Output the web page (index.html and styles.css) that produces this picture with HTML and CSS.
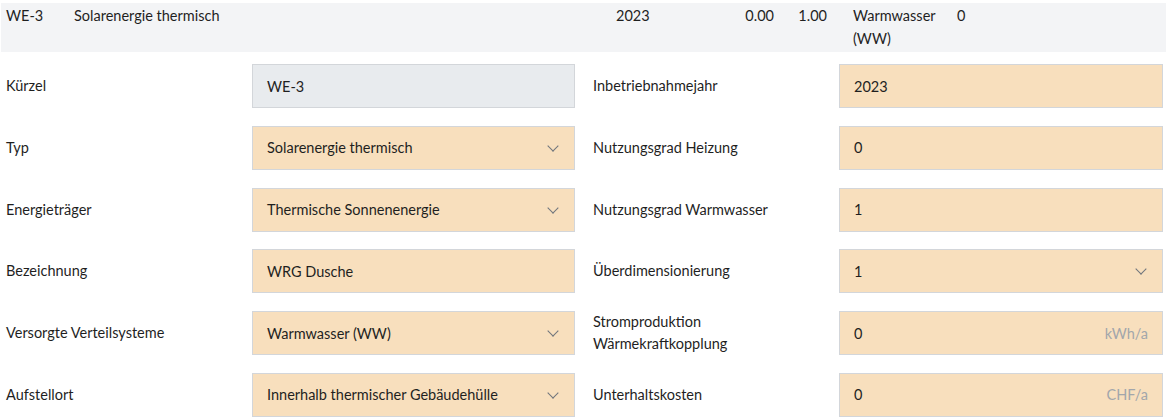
FILE: index.html
```html
<!DOCTYPE html>
<html lang="de">

<head>
    <meta charset="UTF-8">
    <meta name="viewport" content="width=device-width, initial-scale=1.0">
    <title>Wärmeerzeuger</title>
    <link rel="stylesheet" href="styles.css">
</head>

<body>
    <div class="summary">
        <span>WE-3</span>
        <span>Solarenergie thermisch</span>
        <span>2023</span>
        <span class="num">0.00</span>
        <span class="num">1.00</span>
        <span class="wrap">Warmwasser (WW)</span>
        <span>0</span>
    </div>

    <form class="editor">
        <div class="half">
            <label class="lbl">Kürzel</label>
            <div class="field disabled">WE-3</div>

            <label class="lbl">Typ</label>
            <div class="field select">Solarenergie thermisch <span class="chev"></span></div>

            <label class="lbl">Energieträger</label>
            <div class="field select">Thermische Sonnenenergie <span class="chev"></span></div>

            <label class="lbl">Bezeichnung</label>
            <div class="field">WRG Dusche</div>

            <label class="lbl">Versorgte Verteilsysteme</label>
            <div class="field select">Warmwasser (WW) <span class="chev"></span></div>

            <label class="lbl">Aufstellort</label>
            <div class="field select">Innerhalb thermischer Gebäudehülle <span class="chev"></span></div>
        </div>

        <div class="half">
            <label class="lbl">Inbetriebnahmejahr</label>
            <div class="field">2023</div>

            <label class="lbl">Nutzungsgrad Heizung</label>
            <div class="field">0</div>

            <label class="lbl">Nutzungsgrad Warmwasser</label>
            <div class="field">1</div>

            <label class="lbl">Überdimensionierung</label>
            <div class="field select">1 <span class="chev"></span></div>

            <label class="lbl">Stromproduktion Wärmekraftkopplung</label>
            <div class="field">0 <span class="unit">kWh/a</span></div>

            <label class="lbl">Unterhaltskosten</label>
            <div class="field">0 <span class="unit">CHF/a</span></div>
        </div>
    </form>
</body>

</html>
```

FILE: styles.css
```css
body {
    font-family: Lato, "Open Sans", sans-serif;
    font-size: 14.5px;
    color: #1f1f1f;
    margin: 0;
    padding: 3px 2px 0 1px;
    background-color: #fff;
}

.summary {
    display: grid;
    grid-template-columns: 68px 542px 90px 68px 53px 130px 1fr;
    background-color: #f3f4f6;
    padding: 1px 0 2px 5px;
    line-height: 23px;
}

.summary .num {
    text-align: right;
}

.summary .wrap {
    padding-left: 26px;
    padding-right: 14px;
}

.editor {
    display: grid;
    grid-template-columns: 569px 570px;
    column-gap: 18px;
    padding: 12px 0 0 5px;
}

.half {
    display: grid;
    grid-template-columns: 246px 1fr;
    grid-auto-rows: 44px;
    row-gap: 17.8px;
}

.lbl {
    display: flex;
    align-items: center;
    line-height: 22px;
    padding-right: 30px;
}

.field {
    position: relative;
    display: flex;
    align-items: center;
    background-color: #f8dfbd;
    border: 1px solid #d3d6da;
    padding: 0 14px;
}

.field.disabled {
    background-color: #e8ebee;
}

.chev {
    position: absolute;
    right: 17px;
    top: 15px;
    width: 7px;
    height: 7px;
    border-right: 1.4px solid #6f757c;
    border-bottom: 1.4px solid #6f757c;
    transform: rotate(45deg);
}

.unit {
    margin-left: auto;
    color: #a2a6ab;
}
```
